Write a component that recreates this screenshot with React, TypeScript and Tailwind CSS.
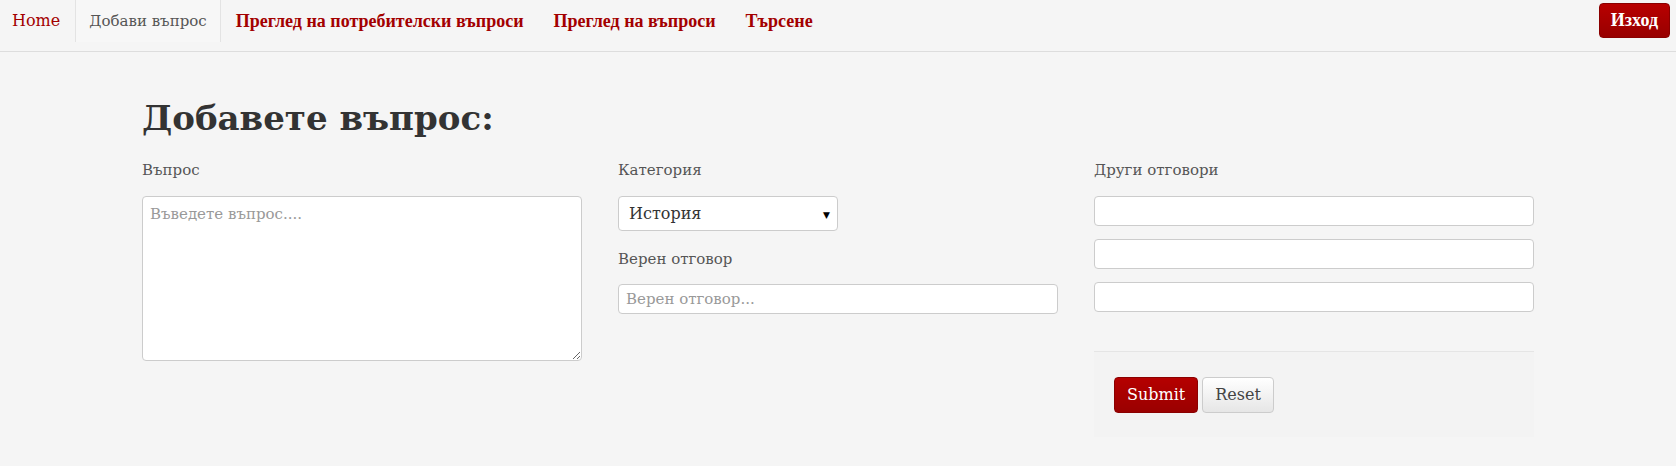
import React from "react";

const serif = { fontFamily: '"DejaVu Serif", "Liberation Serif", serif' };
const times = { fontFamily: '"Liberation Serif", serif' };

export default function App() {
  return (
    <div className="min-h-[466px] bg-[#f5f5f5] text-[#333]" style={serif}>
      <nav className="h-[52px] border-b border-[#dddddd] flex items-start justify-between">
        <ul className="flex items-start h-[42px]">
          <li className="h-full flex items-center pl-[12px] pr-[15px]">
            <a className="text-[16px] text-[#a30000]">Home</a>
          </li>
          <li className="h-full flex items-center px-[13px] border-x border-[#e3e3e3] bg-[#f7f7f7]">
            <a className="text-[15px] text-[#555]">Добави въпрос</a>
          </li>
          <li className="h-full flex items-center px-[15px]">
            <a className="text-[18px] font-bold text-[#a30000]" style={times}>Преглед на потребителски въпроси</a>
          </li>
          <li className="h-full flex items-center px-[15px]">
            <a className="text-[18px] font-bold text-[#a30000]" style={times}>Преглед на въпроси</a>
          </li>
          <li className="h-full flex items-center px-[15px]">
            <a className="text-[18px] font-bold text-[#a30000]" style={times}>Търсене</a>
          </li>
        </ul>
        <button className="mt-[3px] mr-[6px] h-[35px] px-[11px] rounded-[4px] bg-gradient-to-b from-[#b80000] to-[#980000] text-white text-[18px] font-bold border border-[#8a0000]" style={times}>Изход</button>
      </nav>
      <main className="w-[1392px] mx-auto pt-[44px]">
        <h1 className="text-[34px] leading-[44px] font-bold text-[#333]">Добавете въпрос:</h1>
        <div className="grid grid-cols-3 gap-x-[36px] mt-[20px]">
          <div>
            <label className="block text-[15px] leading-[20px] text-[#555] mb-[16px]">Въпрос</label>
            <textarea
              placeholder="Въведете въпрос...."
              className="block w-full h-[165px] bg-white border border-[#cccccc] rounded-[4px] px-[7px] py-[6px] text-[15px] placeholder:text-[#999] resize-y"
            />
          </div>
          <div>
            <label className="block text-[15px] leading-[20px] text-[#555] mb-[16px]">Категория</label>
            <div className="relative w-[220px] h-[35px] bg-white border border-[#cccccc] rounded-[4px] flex items-center px-[10px]">
              <span className="text-[16px] text-[#333]">История</span>
              <span className="absolute right-[7px] top-[12px] text-[9px] text-black">▼</span>
            </div>
            <label className="block text-[15px] leading-[20px] text-[#555] mt-[18px] mb-[15px]">Верен отговор</label>
            <input
              placeholder="Верен отговор..."
              className="block w-full h-[30px] bg-white border border-[#cccccc] rounded-[4px] px-[7px] text-[15px] placeholder:text-[#999]"
            />
          </div>
          <div>
            <label className="block text-[15px] leading-[20px] text-[#555] mb-[16px]">Други отговори</label>
            <div className="flex flex-col gap-[13px]">
              <input className="block w-full h-[30px] bg-white border border-[#cccccc] rounded-[4px]" />
              <input className="block w-full h-[30px] bg-white border border-[#cccccc] rounded-[4px]" />
              <input className="block w-full h-[30px] bg-white border border-[#cccccc] rounded-[4px]" />
            </div>
            <div className="mt-[39px] border-t border-[#e5e5e5] bg-[#f3f3f3] h-[86px] pt-[25px] px-[20px] flex items-start gap-[4px]">
              <button className="h-[36px] px-[12px] rounded-[4px] bg-gradient-to-b from-[#b50000] to-[#9a0000] text-white text-[16px] border border-[#8a0000]">Submit</button>
              <button className="h-[36px] px-[12px] rounded-[4px] bg-gradient-to-b from-[#ffffff] to-[#e6e6e6] text-[#444] text-[16px] border border-[#cccccc]">Reset</button>
            </div>
          </div>
        </div>
      </main>
    </div>
  );
}
